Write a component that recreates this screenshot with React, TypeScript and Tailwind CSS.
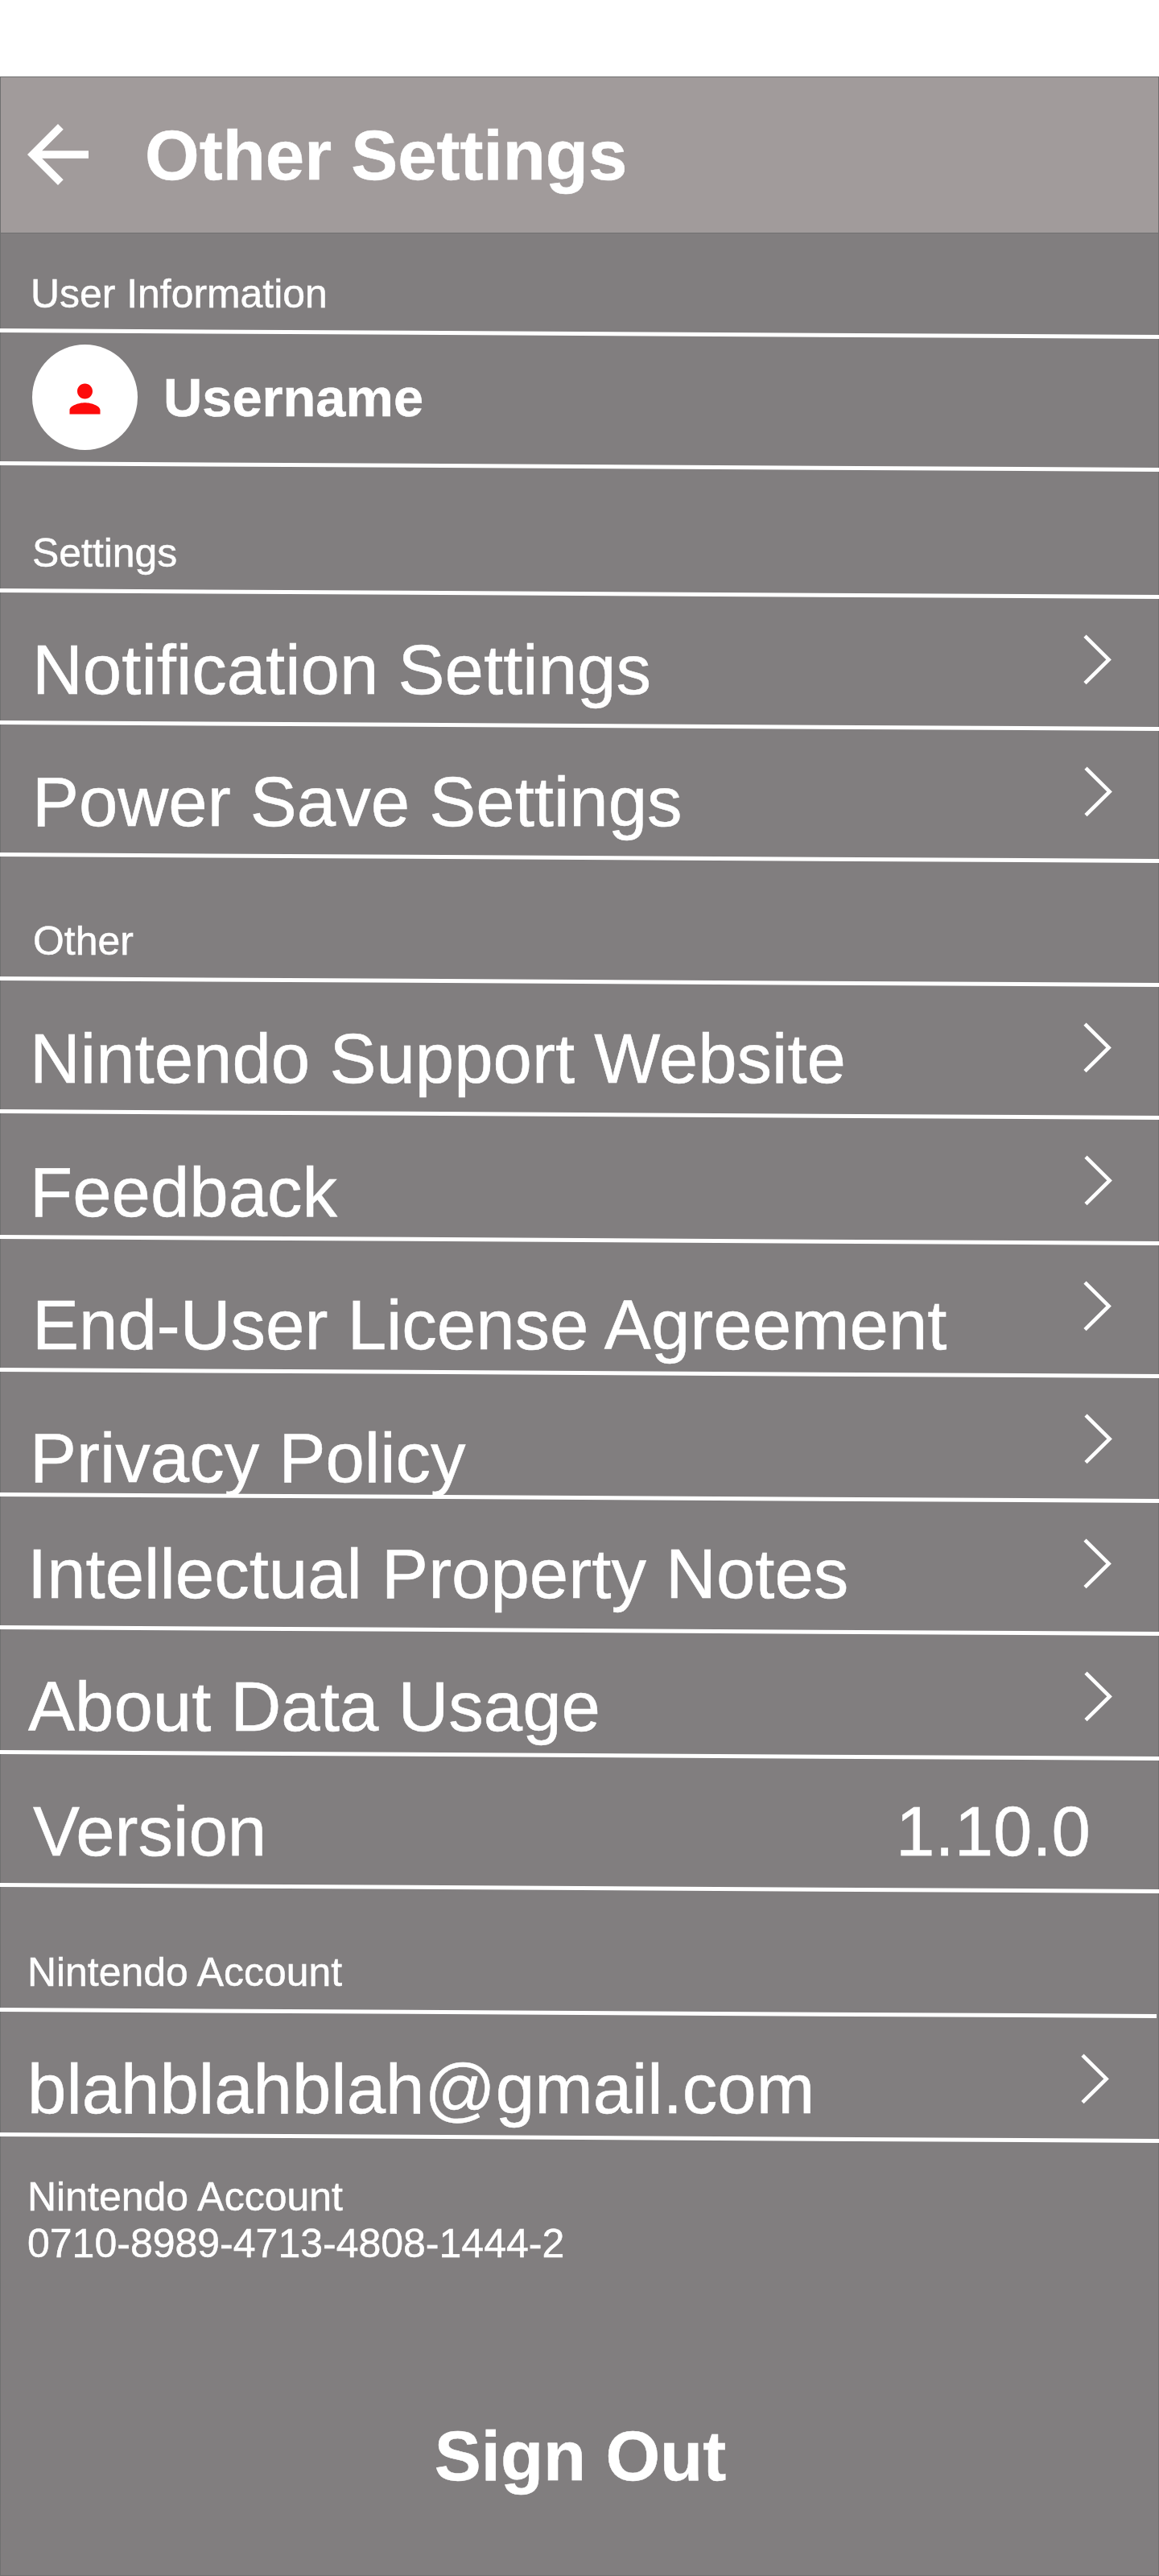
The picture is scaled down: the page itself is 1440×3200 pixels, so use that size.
import type { ReactNode } from "react";
import clsx from "clsx";
import { MdArrowBack, MdPerson } from "react-icons/md";

type RowItem = {
  label: string;
  value?: string;
  // height, and the small offsets each label sits at
  row: string;
  text: string;
  chevron?: string;
};

const settingsRows: RowItem[] = [
  { label: "Notification Settings", row: "h-[164px]", text: "pt-[46px] pl-[40px]", chevron: "mr-[59px]" },
  { label: "Power Save Settings", row: "h-[164px]", text: "pt-[46px] pl-[40px]", chevron: "mr-[58px]" },
];

const otherRows: RowItem[] = [
  { label: "Nintendo Support Website", row: "h-[165px]", text: "pt-[47px] pl-[37px]", chevron: "mr-[59px]" },
  { label: "Feedback", row: "h-[156px]", text: "pt-[48px] pl-[37px]", chevron: "mr-[58px]" },
  { label: "End-User License Agreement", row: "h-[165px]", text: "pt-[57px] pl-[40px]", chevron: "mr-[59px]" },
  { label: "Privacy Policy", row: "h-[155px]", text: "pt-[57px] pl-[37px]", chevron: "mr-[58px]" },
  { label: "Intellectual Property Notes", row: "h-[165px]", text: "pt-[46px] pl-[34px]", chevron: "mr-[59px]" },
  { label: "About Data Usage", row: "h-[155px]", text: "pt-[46px] pl-[35px]", chevron: "mr-[58px]" },
  { label: "Version", value: "1.10.0", row: "h-[165px]", text: "pt-[46px] pl-[41px]" },
];

export default function App() {
  return (
    <div className="h-[3200px] w-[1440px] overflow-hidden bg-white pt-[95px] font-['Liberation_Sans',Arial,sans-serif] text-white [-webkit-text-stroke:0.5px_white]">
      <main className="relative flex h-[3105px] flex-col bg-[#817e7f]">
        <header className="flex h-[195px] shrink-0 items-start border border-[#707070] bg-[#a19b9b]">
          <MdArrowBack className="mt-[39px] ml-[14px] size-[114px]" aria-hidden="true" />
          <h1 className="mt-[47px] ml-[51px] text-[87px] leading-[100px] font-bold">Other Settings</h1>
        </header>

        <SectionTitle className="h-[118px] pt-[46px] pl-[38px]">User Information</SectionTitle>
        <div className="h-[165px] shrink-0">
          <Divider />
          <div className="flex items-start">
            <div className="mt-[15px] ml-[40px] flex size-[131px] items-center justify-center rounded-full bg-white">
              <MdPerson className="mt-[3px] size-[57px] text-[#fd0b0b]" aria-hidden="true" />
            </div>
            <span className="mt-[43px] ml-[32px] text-[66.8px] leading-[76px] font-bold">Username</span>
          </div>
        </div>
        <Divider />

        <SectionTitle className="h-[153px] pt-[80px] pl-[40px]">Settings</SectionTitle>
        {settingsRows.map((item) => (
          <Row key={item.label} {...item} />
        ))}
        <Divider />

        <SectionTitle className="h-[149px] pt-[76px] pl-[41px]">Other</SectionTitle>
        {otherRows.map((item) => (
          <Row key={item.label} {...item} />
        ))}
        <Divider />

        <SectionTitle className="h-[150px] pt-[77px] pl-[34px]">Nintendo Account</SectionTitle>
        <Row
          label="blahblahblah@gmail.com"
          row="h-[155px]"
          text="pt-[46px] pl-[34px]"
          chevron="mr-[62px]"
          divider="w-[1437px]"
        />
        <Divider />

        <div className="pt-[46px] pl-[34px] text-[50px] leading-[58px]">
          <p>Nintendo Account</p>
          <p>0710-8989-4713-4808-1444-2</p>
        </div>

        <button type="button" className="mt-[185px] pl-[2px] text-center text-[87px] leading-[100px] font-bold">
          Sign Out
        </button>

        <div className="pointer-events-none absolute inset-0 border border-[#707070]" />
      </main>
    </div>
  );
}

function SectionTitle({ className, children }: { className: string; children: ReactNode }) {
  return <h2 className={clsx("shrink-0 text-[49.9px] leading-[58px]", className)}>{children}</h2>;
}

function Row({ label, value, row, text, chevron, divider }: RowItem & { divider?: string }) {
  return (
    <div className={clsx("shrink-0", row)}>
      <Divider className={divider} />
      <div className="flex items-start justify-between text-[87px] leading-[100px] whitespace-nowrap">
        <span className={text}>{label}</span>
        {value && <span className="mt-[46px] mr-[85px]">{value}</span>}
        {chevron && <Chevron className={chevron} />}
      </div>
    </div>
  );
}

// Slightly tilted rule, 8px lower at its right end
function Divider({ className }: { className?: string }) {
  return <div className={clsx("relative z-10 h-[5px] shrink-0 origin-left skew-y-[0.318deg] bg-white", className)} />;
}

function Chevron({ className }: { className: string }) {
  return (
    <svg viewBox="0 0 35 63" className={clsx("mt-[52px] h-[63px] w-[35px]", className)} fill="none" aria-hidden="true">
      <path d="M2 2.2 31.6 31.4 2 60.6" stroke="currentColor" strokeWidth="4.6" />
    </svg>
  );
}
